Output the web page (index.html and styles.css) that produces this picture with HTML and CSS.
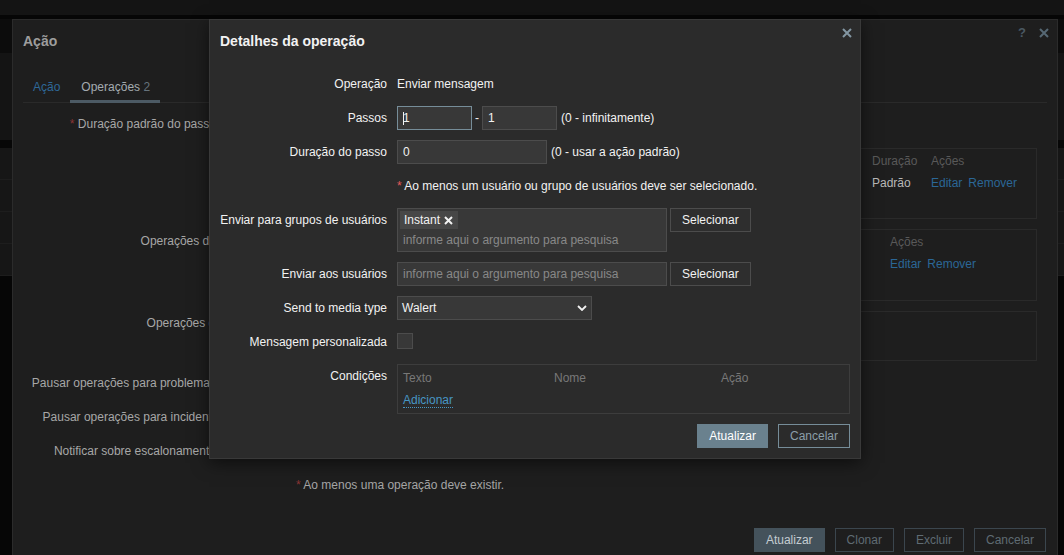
FILE: index.html
```html
<!DOCTYPE html>
<html lang="pt-BR">
<head>
  <meta charset="UTF-8" />
  <meta name="viewport" content="width=device-width, initial-scale=1" />
  <title>Ação – Detalhes da operação</title>

  <link rel="stylesheet" href="styles.css">
</head>

<body>
  <!-- ===== PAGE BEHIND THE DIALOGS (dimmed) ===== -->
  <div class="page">
    <div class="page-top"></div>
    <div class="page-band page-band-dark"></div>
    <div class="page-band page-band-head"></div>
    <div class="page-band page-band-gap"></div>
    <div class="page-row"></div>
    <div class="page-row"></div>
    <div class="page-row"></div>
    <div class="page-row"></div>
  </div>

  <!-- ===== ACTION DIALOG ===== -->
  <div class="dialog">
    <div class="dialog-head">
      <h4 class="dialog-title">Ação</h4>
      <span class="dialog-help">?</span>
      <button class="dialog-close" title="Fechar">
        <svg viewBox="0 0 10 10" width="10" height="10"><path d="M1 1L9 9M9 1L1 9" /></svg>
      </button>
    </div>

    <ul class="tabs">
      <li class="tab"><a class="tab-link">Ação</a></li>
      <li class="tab active">Operações <span class="tab-count">2</span></li>
    </ul>

    <!-- the modal covers the fields column; only the right part of it shows -->
    <div class="form-grid">
      <label class="form-label"><span class="req">*</span> Duração padrão do passo de operação</label>
      <div class="form-field form-field-first"><span class="bg-input"></span></div>

      <div></div>
      <div class="op-table op-table-main">
        <div class="op-row op-head op-cols-5">
          <span></span><span></span><span></span><span>Duração</span><span>Ações</span>
        </div>
        <div class="op-row op-cols-5">
          <span></span><span></span><span></span><span class="op-value">Padrão</span>
          <span><a class="link">Editar</a><a class="link">Remover</a></span>
        </div>
        <div class="op-row"></div>
      </div>

      <label class="form-label">Operações de recuperação</label>
      <div class="op-table op-table-recovery">
        <div class="op-row op-head op-cols-2"><span></span><span>Ações</span></div>
        <div class="op-row op-cols-2">
          <span></span>
          <span><a class="link">Editar</a><a class="link">Remover</a></span>
        </div>
        <div class="op-row"></div>
      </div>

      <label class="form-label">Operações de atualização</label>
      <div class="op-table op-table-update"></div>

      <label class="form-label">Pausar operações para problemas sintomáticos</label>
      <div class="form-field"><span class="bg-check"></span></div>

      <label class="form-label">Pausar operações para incidentes suprimidos</label>
      <div class="form-field"><span class="bg-check"></span></div>

      <label class="form-label">Notificar sobre escalonamentos cancelados</label>
      <div class="form-field"><span class="bg-check"></span></div>

      <div></div>
      <div class="form-field form-note"><span class="req">*</span> Ao menos uma operação deve existir.</div>
    </div>

    <div class="dialog-foot">
      <button class="bg-btn bg-btn-main">Atualizar</button>
      <button class="bg-btn">Clonar</button>
      <button class="bg-btn">Excluir</button>
      <button class="bg-btn">Cancelar</button>
    </div>
  </div>

  <!-- ===== OPERATION DETAILS MODAL ===== -->
  <div class="modal">
    <div class="modal-head">
      <h4 class="modal-title">Detalhes da operação</h4>
      <button class="modal-close" title="Fechar">
        <svg viewBox="0 0 10 10" width="10" height="10"><path d="M1 1L9 9M9 1L1 9" /></svg>
      </button>
    </div>

    <div class="modal-form">
      <label class="label">Operação</label>
      <div class="field field-text">Enviar mensagem</div>

      <label class="label">Passos</label>
      <div class="field field-inline">
        <span class="caret-wrap"><input class="input input-step is-focus" value="1"></span>
        <span class="dash">-</span>
        <input class="input input-step" value="1">
        <span class="hint">(0 - infinitamente)</span>
      </div>

      <label class="label">Duração do passo</label>
      <div class="field field-inline">
        <input class="input input-duration" value="0">
        <span class="hint">(0 - usar a ação padrão)</span>
      </div>

      <div></div>
      <div class="field field-text"><span class="req-bright">*</span> Ao menos um usuário ou grupo de usuários deve ser selecionado.</div>

      <label class="label">Enviar para grupos de usuários</label>
      <div class="field field-inline field-top">
        <div class="multiselect">
          <span class="tag">Instant
            <svg viewBox="0 0 9 9" width="9" height="9"><path d="M1 1L8 8M8 1L1 8" /></svg>
          </span>
          <div class="ms-input">informe aqui o argumento para pesquisa</div>
        </div>
        <button class="btn-alt">Selecionar</button>
      </div>

      <label class="label">Enviar aos usuários</label>
      <div class="field field-inline field-top">
        <input class="input input-search" placeholder="informe aqui o argumento para pesquisa">
        <button class="btn-alt">Selecionar</button>
      </div>

      <label class="label">Send to media type</label>
      <div class="field">
        <div class="select">
          <span>Walert</span>
          <svg viewBox="0 0 10 6" width="10" height="6"><path d="M1 1l4 4 4-4" /></svg>
        </div>
      </div>

      <label class="label">Mensagem personalizada</label>
      <div class="field"><span class="checkbox"></span></div>

      <label class="label">Condições</label>
      <div class="field">
        <div class="cond">
          <div class="cond-row cond-head"><span>Texto</span><span>Nome</span><span>Ação</span></div>
          <div class="cond-row"><a class="link-bright">Adicionar</a></div>
        </div>
      </div>
    </div>

    <div class="modal-foot">
      <button class="btn btn-main">Atualizar</button>
      <button class="btn btn-outline">Cancelar</button>
    </div>
  </div>
</body>
</html>
```

FILE: styles.css
```css
/* === PALETTE === */
:root {
  --bg-page: #060606;
  --bg-dialog: #1e1e1e;
  --bg-modal: #2b2b2b;
  --bg-input: #383838;
  --border-input: #4c4c4c;
  --text: #f2f2f2;
  --text-dim: #a7a7a7;
  --accent: #768d99;
  --link: #4796c4;
  --red: #e45959;
}

/* 1) Reset + base */
* {
  margin: 0;
  padding: 0;
  box-sizing: border-box;
}
body {
  background-color: var(--bg-page);
  font-family: "Liberation Sans", Arial, sans-serif;
  font-size: 12px;
  line-height: 14px;
  overflow: hidden;
  position: relative;
  height: 555px;
}
button {
  font: inherit;
  cursor: pointer;
}
input {
  font: inherit;
  outline: none;
}

/* 2) Page behind the dialogs */
.page-top {
  height: 15px;
  background: #141414;
}
.page-band-dark {
  height: 38px;
  border-top: 4px solid #060606;
  background: #0c0c0c;
}
.page-band-head {
  height: 87px;
  background: #141414;
}
.page-band-gap {
  height: 8px;
  background: #070707;
}
.page-row {
  height: 32px;
  background: #161616;
  border-bottom: 1px solid #1d1d1d;
}

/* 3) Action dialog (dimmed under the modal) */
.dialog {
  position: absolute;
  left: 12px;
  top: 19px;
  width: 1046px;
  height: 560px;
  background: var(--bg-dialog);
  border: 1px solid #2b2b2b;
  color: var(--text-dim);
}
.dialog-head {
  display: flex;
  align-items: flex-start;
  height: 43px;
  padding: 0 8px 0 10px;
}
.dialog-title {
  flex: 1;
  font-size: 14px;
  line-height: 43px;
  font-weight: bold;
  color: #9d9d9d;
}
.dialog-help {
  margin-top: 6px;
  margin-right: 13px;
  font-size: 13px;
  line-height: 14px;
  font-weight: bold;
  color: #4a5862;
}
.dialog-close,
.modal-close {
  width: 10px;
  height: 10px;
  margin-top: 8px;
  background: none;
  border: none;
  display: flex;
}
.dialog-close svg,
.modal-close svg {
  stroke: currentColor;
  stroke-width: 2;
  fill: none;
}
.dialog-close {
  color: #566874;
}

/* tabs */
.tabs {
  display: flex;
  list-style: none;
  margin: 7px 10px 0;
  height: 32px;
  box-sizing: content-box;
  border-bottom: 1px solid #2a2a2a;
}
.tab {
  height: 33px;
  padding: 10px 10px 6px;
  border-bottom: 3px solid transparent;
}
.tab.active {
  padding-left: 11px;
  border-bottom-color: #4c5a64;
  color: #a4abb0;
}
.tab-link {
  color: #2e6898;
}
.tab-count {
  color: #66737c;
}

/* form */
.form-grid {
  display: grid;
  grid-template-columns: 263px 741px;
  column-gap: 10px;
  row-gap: 10px;
  padding: 9px 0 0 10px;
}
.form-label {
  text-align: right;
  padding-top: 5px;
  white-space: nowrap;
}
.form-field {
  min-height: 24px;
}
.form-field-first {
  min-height: 26px;
}
.form-note {
  line-height: 24px;
  color: #a5a5a5;
}
.req {
  color: #8a3535;
}
.bg-input {
  display: block;
  width: 80px;
  height: 24px;
  background: #2a2a2a;
  border: 1px solid #333;
}
.bg-check {
  display: block;
  width: 16px;
  height: 16px;
  margin-top: 4px;
  background: #2a2a2a;
  border: 1px solid #333;
}

/* operation tables */
.op-table {
  border: 1px solid #2a2a2a;
  padding: 1px 5px 2px;
}
.op-table-recovery {
  padding-bottom: 3px;
}
.op-table-update {
  height: 50px;
}
.op-row {
  height: 22px;
  display: flex;
  align-items: center;
  white-space: nowrap;
}
.op-row > span {
  overflow: hidden;
}
.op-cols-5 {
  display: grid;
  grid-template-columns: 60px 440px 70px 59px 1fr;
}
.op-cols-2 {
  display: grid;
  grid-template-columns: 588px 1fr;
}
.op-head {
  color: #595959;
}
.op-value {
  color: #b8b8b8;
}
.link {
  color: #2b6797;
  border-bottom: 1px dotted #2b6797;
  margin-right: 6px;
}

/* footer */
.dialog-foot {
  display: flex;
  justify-content: flex-end;
  gap: 10px;
  margin-top: 31px;
  padding-right: 11px;
}
.bg-btn {
  height: 24px;
  padding: 0 11px;
  background: none;
  border: 1px solid #3b464e;
  color: #5f6b73;
}
.bg-btn-main {
  background: #44525b;
  border-color: #44525b;
  color: #c4cdd2;
}

/* 4) Operation details modal */
.modal {
  position: absolute;
  left: 209px;
  top: 19px;
  width: 652px;
  height: 440px;
  background: var(--bg-modal);
  border: 1px solid #393939;
  box-shadow: 0 4px 16px rgba(0, 0, 0, 0.55);
  color: var(--text);
}
.modal-head {
  display: flex;
  align-items: flex-start;
  height: 44px;
  padding: 0 8px 0 10px;
}
.modal-title {
  flex: 1;
  font-size: 14px;
  line-height: 43px;
  font-weight: bold;
}
.modal-close {
  color: #8396a2;
}

.modal-form {
  display: grid;
  grid-template-columns: 167px 453px;
  column-gap: 10px;
  row-gap: 10px;
  padding: 8px 10px 0;
}
.label {
  text-align: right;
  line-height: 24px;
  white-space: nowrap;
}
.field {
  min-height: 24px;
}
.field-text {
  line-height: 24px;
  white-space: nowrap;
}
.field-inline {
  display: flex;
  align-items: center;
}
.field-top {
  align-items: flex-start;
  gap: 3px;
}
.req-bright {
  color: var(--red);
}

/* inputs */
.input {
  height: 24px;
  background: var(--bg-input);
  border: 1px solid var(--border-input);
  color: var(--text);
  padding: 0 5px;
}
.input::placeholder {
  color: #888;
}
.input-step {
  width: 75px;
}
.input-duration {
  width: 150px;
}
.input-search {
  width: 270px;
}
.input.is-focus {
  border-color: var(--accent);
}
.caret-wrap {
  position: relative;
  display: flex;
}
.caret-wrap::after {
  content: "";
  position: absolute;
  left: 6px;
  top: 6px;
  width: 1px;
  height: 13px;
  background: var(--text);
}
.dash {
  margin: 0 3px;
}
.hint {
  margin-left: 4px;
  white-space: nowrap;
}

/* multiselect */
.multiselect {
  width: 270px;
  height: 44px;
  background: var(--bg-input);
  border: 1px solid var(--border-input);
  padding: 2px;
}
.tag {
  display: inline-flex;
  align-items: center;
  gap: 4px;
  height: 18px;
  padding: 0 5px 0 4px;
  background: #474747;
}
.tag svg {
  stroke: var(--text);
  stroke-width: 2;
  fill: none;
}
.ms-input {
  line-height: 22px;
  padding-left: 3px;
  color: #888;
}

.btn-alt {
  height: 24px;
  padding: 0 11px;
  background: #2e2e2e;
  border: 1px solid var(--border-input);
  color: var(--text);
}

/* select */
.select {
  width: 195px;
  height: 24px;
  display: flex;
  align-items: center;
  justify-content: space-between;
  padding: 0 4px;
  background: var(--bg-input);
  border: 1px solid var(--border-input);
}
.select svg {
  stroke: var(--text);
  stroke-width: 1.8;
  fill: none;
}

.checkbox {
  display: block;
  width: 16px;
  height: 16px;
  margin-top: 3px;
  background: var(--bg-input);
  border: 1px solid var(--border-input);
}

/* conditions */
.cond {
  border: 1px solid #3d3d3d;
  padding: 2px 5px 2px;
}
.cond-row {
  height: 22px;
  display: flex;
  align-items: center;
}
.cond-head {
  display: grid;
  grid-template-columns: 151px 167px 1fr;
  color: #787878;
}
.link-bright {
  color: var(--link);
  border-bottom: 1px dotted var(--link);
}

/* modal footer */
.modal-foot {
  display: flex;
  justify-content: flex-end;
  gap: 10px;
  padding: 10px 10px 0;
}
.btn {
  height: 24px;
  padding: 0 11px;
  border: 1px solid var(--accent);
}
.btn-main {
  background: #6a818e;
  border-color: #6a818e;
  color: #fff;
}
.btn-outline {
  background: none;
  color: #8b9ea9;
}
```
